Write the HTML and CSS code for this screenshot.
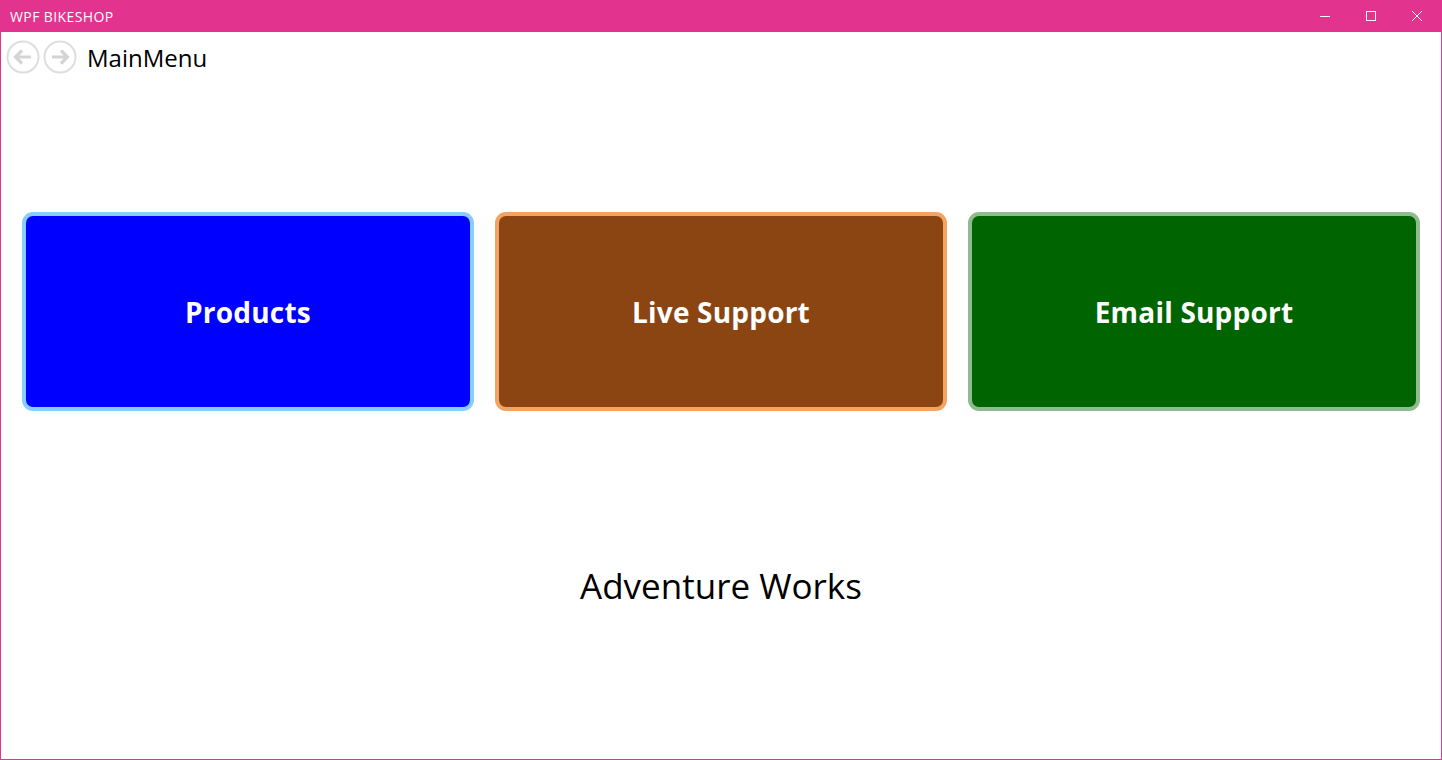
FILE: index.html
```html
<!DOCTYPE html>
<html>
<head>
<meta charset="utf-8">
<link rel="stylesheet" href="styles.css">
</head>
<body>
<div class="window">
  <div class="titlebar">
    <span class="title">WPF BIKESHOP</span>
    <div class="controls">
      <span class="ctl"><svg width="10" height="10" viewBox="0 0 10 10"><path d="M0 5.5H10" stroke="#fff" stroke-width="1"/></svg></span>
      <span class="ctl"><svg width="10" height="10" viewBox="0 0 10 10"><rect x="0.5" y="0.5" width="9" height="9" fill="none" stroke="#fff" stroke-width="1"/></svg></span>
      <span class="ctl"><svg width="10" height="10" viewBox="0 0 10 10"><path d="M0 0L10 10M10 0L0 10" stroke="#fff" stroke-width="1"/></svg></span>
    </div>
  </div>
  <div class="content">
    <div class="nav">
      <svg class="navbtn" width="34" height="34" viewBox="0 0 34 34"><circle cx="17" cy="17" r="15.5" fill="none" stroke="#dedede" stroke-width="2"/><path d="M25 17H10M16 10.5L9.5 17L16 23.5" fill="none" stroke="#d4d4d4" stroke-width="3.2"/></svg>
      <svg class="navbtn" width="34" height="34" viewBox="0 0 34 34"><circle cx="17" cy="17" r="15.5" fill="none" stroke="#dedede" stroke-width="2"/><path d="M9 17H24M18 10.5L24.5 17L18 23.5" fill="none" stroke="#d4d4d4" stroke-width="3.2"/></svg>
      <span class="page-title">MainMenu</span>
    </div>
    <div class="cards">
      <div class="card products">Products</div>
      <div class="card live">Live Support</div>
      <div class="card email">Email Support</div>
    </div>
    <div class="brand">Adventure Works</div>
  </div>
</div>
</body>
</html>
```
FILE: styles.css
```css
html, body {
  margin: 0;
  padding: 0;
  background: #ffffff;
}
body {
  font-family: "Open Sans", "Noto Sans", sans-serif;
}
.window {
  width: 1442px;
  height: 760px;
  box-sizing: border-box;
  border: 1px solid #e2338e;
  border-top: 0;
  display: flex;
  flex-direction: column;
}
.titlebar {
  height: 32px;
  flex: none;
  background: #e2338e;
  display: flex;
  align-items: center;
  justify-content: space-between;
  color: #ffffff;
}
.title {
  font-size: 14px;
  padding-left: 9px;
  letter-spacing: 0.4px;
}
.controls {
  display: flex;
  height: 32px;
  margin-right: 1px;
}
.ctl {
  width: 46px;
  height: 32px;
  display: flex;
  align-items: center;
  justify-content: center;
}
.content {
  flex: 1;
  display: flex;
  flex-direction: column;
}
.nav {
  display: flex;
  align-items: center;
  padding: 8px 0 0 5px;
  gap: 3px;
  height: 34px;
}
.page-title {
  font-size: 24px;
  color: #000;
  margin-left: 7px;
  line-height: 34px;
  margin-top: 1px;
}
.cards {
  display: grid;
  grid-template-columns: repeat(3, 1fr);
  gap: 21px;
  padding: 0 21px;
  margin-top: 138px;
}
.card {
  height: 199px;
  box-sizing: border-box;
  border: 4px solid;
  border-radius: 11px;
  display: flex;
  align-items: center;
  justify-content: center;
  color: #ffffff;
  font-weight: 700;
  font-size: 28px;
  letter-spacing: 0.2px;
}
.products {
  background: #0000ff;
  border-color: #87cefa;
}
.live {
  background: #8b4513;
  border-color: #f4a460;
}
.email {
  background: #006400;
  border-color: #8fbc8f;
}
.brand {
  text-align: center;
  font-size: 35px;
  color: #000;
  margin-top: 151px;
  line-height: 48px;
}
```
